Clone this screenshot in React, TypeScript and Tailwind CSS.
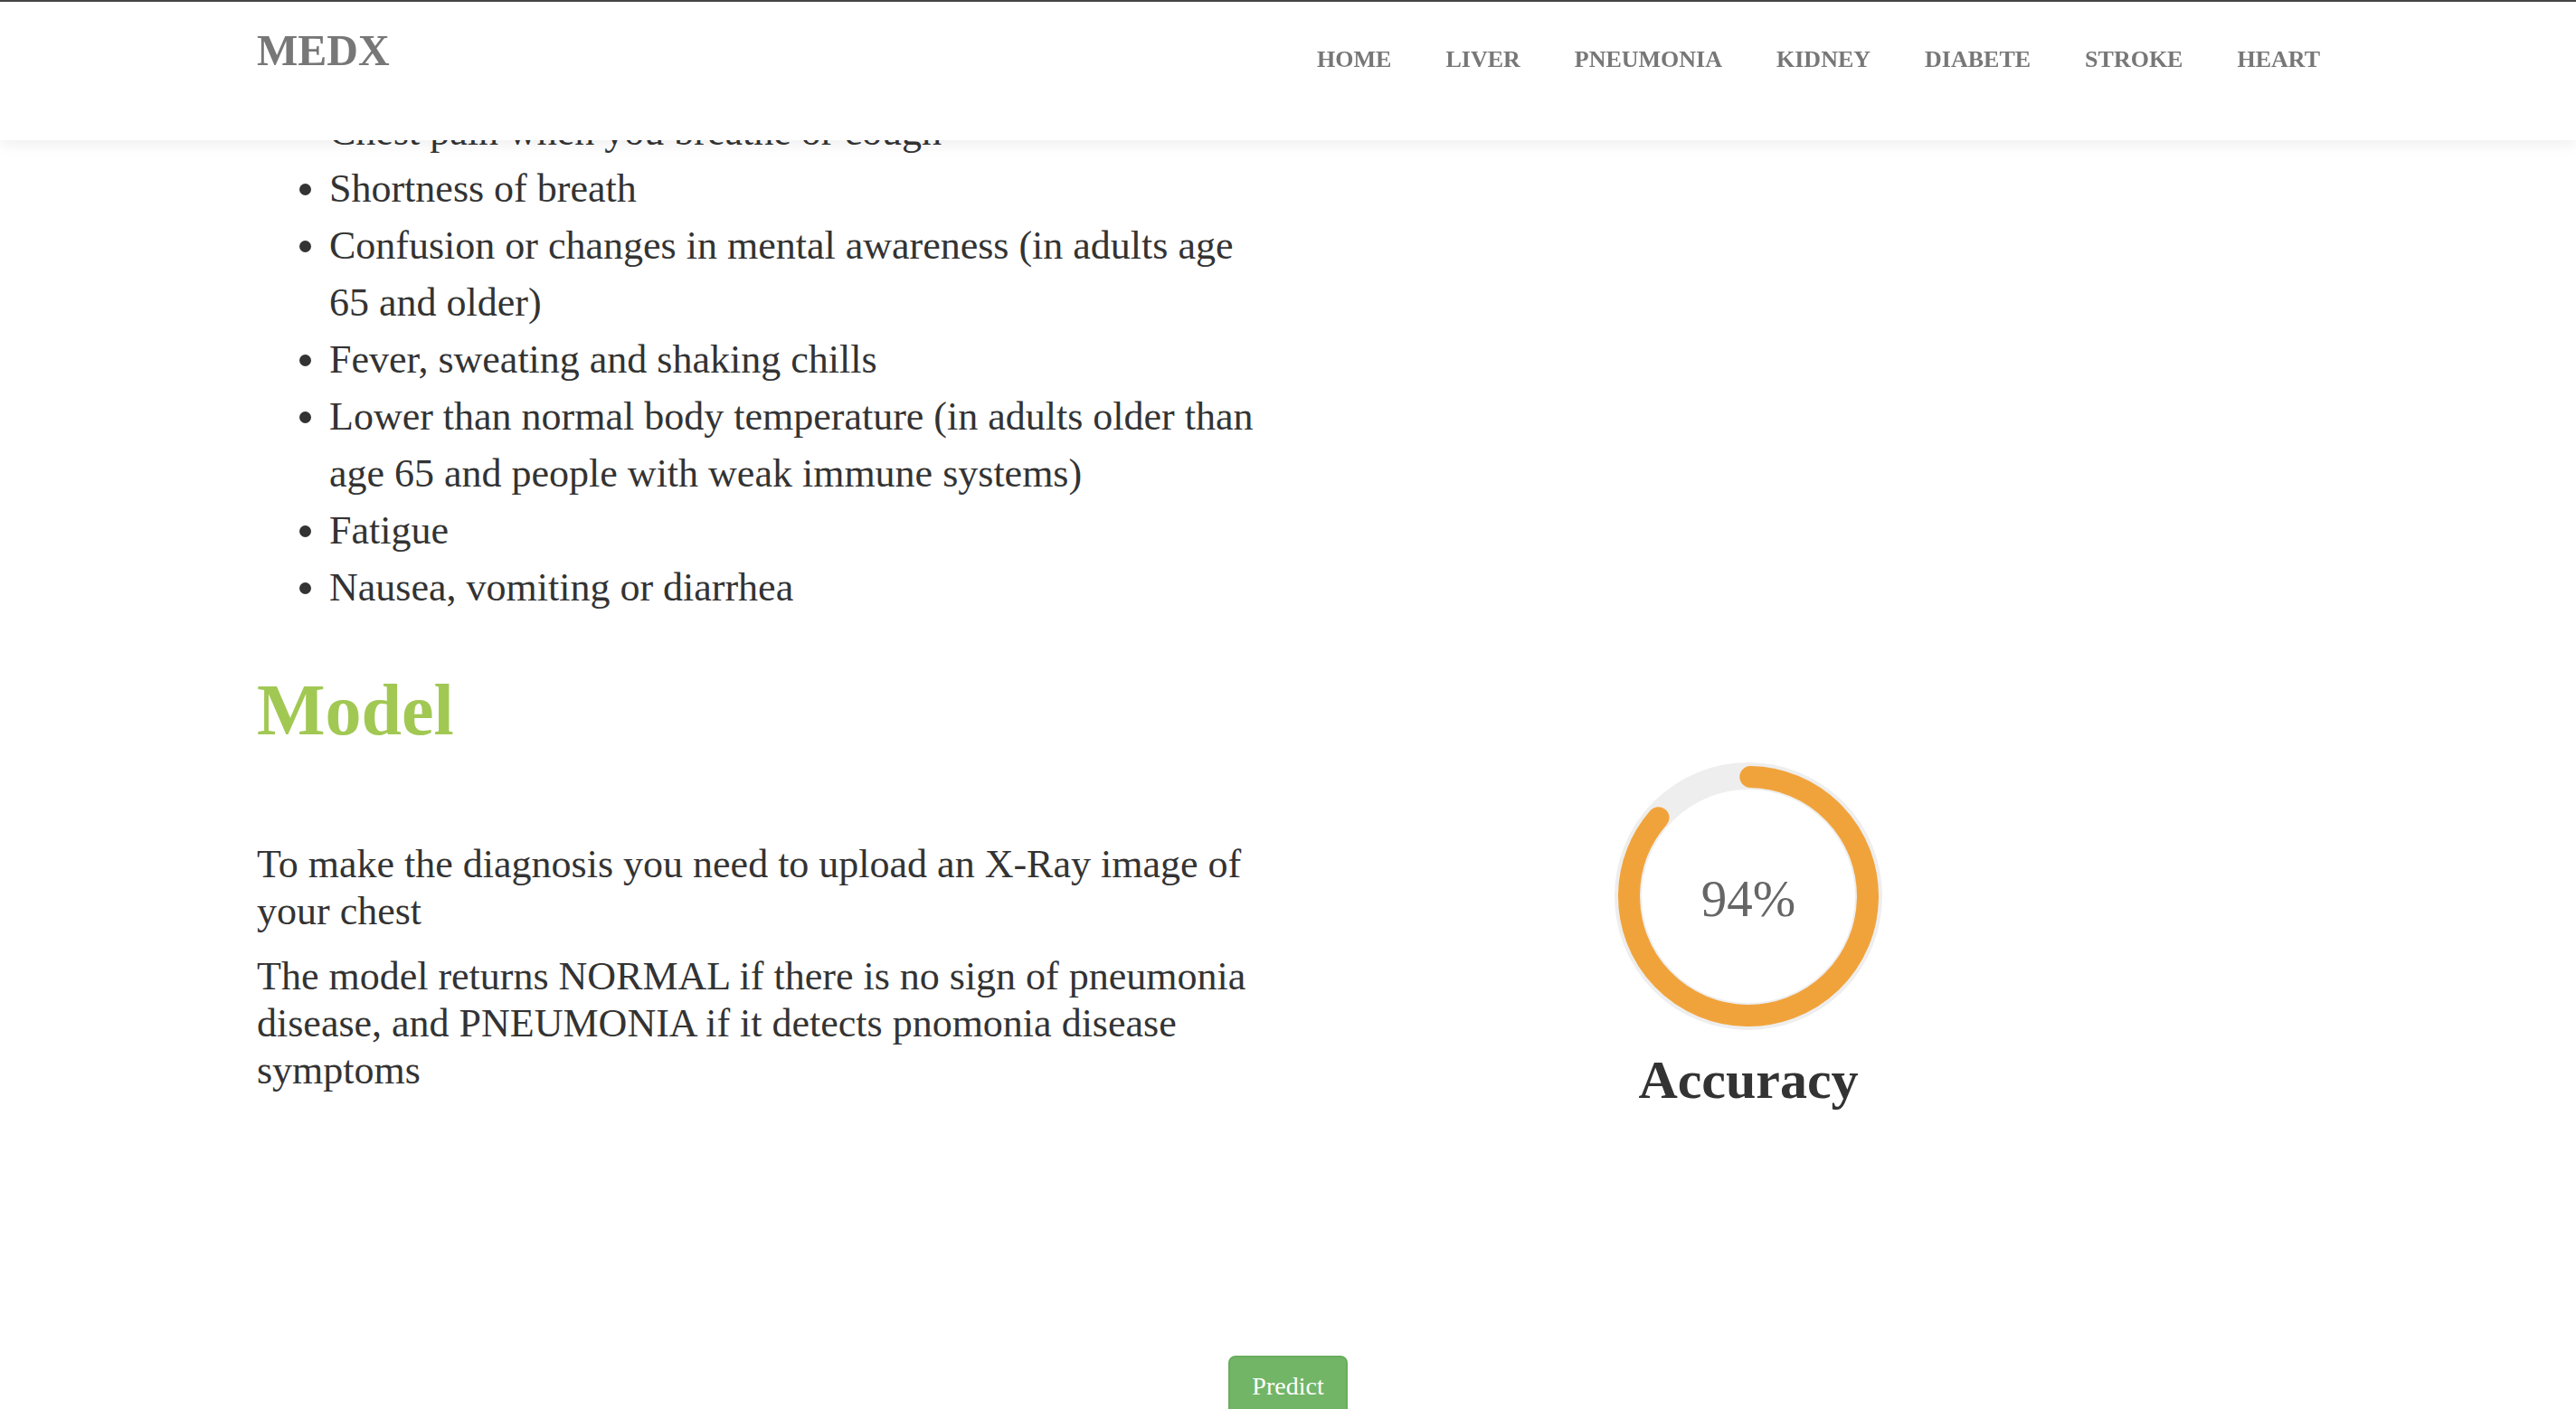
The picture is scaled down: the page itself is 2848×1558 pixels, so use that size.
import React from "react";

const NAV_LINKS = ["HOME", "LIVER", "PNEUMONIA", "KIDNEY", "DIABETE", "STROKE", "HEART"];

const SYMPTOMS = [
  "Chest pain when you breathe or cough",
  "Shortness of breath",
  "Confusion or changes in mental awareness (in adults age 65 and older)",
  "Fever, sweating and shaking chills",
  "Lower than normal body temperature (in adults older than age 65 and people with weak immune systems)",
  "Fatigue",
  "Nausea, vomiting or diarrhea",
];

const ACCURACY = 94;
const RADIUS = 132;
const CIRCUMFERENCE = 2 * Math.PI * RADIUS;
// the arc in the picture stops a bit short of the value, roughly 310deg
const ARC = (310 / 360) * CIRCUMFERENCE;

const AccuracyRing: React.FC = () => (
  <div className="flex flex-col items-center w-[300px]">
    <div className="relative w-[300px] h-[300px]">
      <svg width="300" height="300" viewBox="0 0 300 300">
        <circle cx="150" cy="150" r="133" fill="none" stroke="#eeeeee" strokeWidth="30" />
        <circle
          cx="150"
          cy="150"
          r={RADIUS}
          fill="none"
          stroke="#f1a33b"
          strokeWidth="24"
          strokeLinecap="round"
          strokeDasharray={`${ARC} ${CIRCUMFERENCE}`}
          transform="rotate(-89 150 150)"
        />
      </svg>
      <div className="absolute inset-0 flex items-center justify-center">
        <span className="text-[57px] leading-none text-[#666] pt-[4px]">{ACCURACY}%</span>
      </div>
    </div>
    <h3 className="mt-[20px] text-[60px] leading-[66px] font-bold text-[#333]">Accuracy</h3>
  </div>
);

export default function App() {
  return (
    <div className="min-h-screen bg-white text-[#333] font-['Liberation_Serif','Times_New_Roman',serif]">
      {/* Top navbar, fixed over the scrolled page */}
      <header className="fixed top-0 inset-x-0 z-10 h-[155px] bg-white border-t-2 border-[#444] shadow-[0_6px_14px_rgba(0,0,0,0.06)]">
        <div className="w-[2280px] mx-auto flex justify-between items-start">
          <a className="mt-[30px] text-[48px] leading-[48px] font-bold text-[#777]">MEDX</a>
          <nav className="mt-[51px] flex gap-[60px] mr-[-1px]">
            {NAV_LINKS.map((link) => (
              <a key={link} className="text-[26px] leading-[26px] font-bold text-[#777]">
                {link}
              </a>
            ))}
          </nav>
        </div>
      </header>

      <main className="w-[2280px] mx-auto pt-[114px]">
        <ul className="w-[1110px] list-disc pl-[80px] text-[44px] leading-[63px]">
          {SYMPTOMS.map((s) => (
            <li key={s}>{s}</li>
          ))}
        </ul>

        <section className="mt-[61px] grid grid-cols-2 gap-[60px]">
          <div>
            <h2 className="text-[80px] leading-[86px] font-bold text-[#a2c854]">Model</h2>
            <p className="mt-[102px] text-[44px] leading-[52px]">
              To make the diagnosis you need to upload an X-Ray image of your chest
            </p>
            <p className="mt-[20px] text-[44px] leading-[52px]">
              The model returns NORMAL if there is no sign of pneumonia disease, and PNEUMONIA if it
              detects pnomonia disease symptoms
            </p>
          </div>
          <div className="pt-[99px] pl-[329px]">
            <AccuracyRing />
          </div>
        </section>

        <div className="mt-[272px] flex justify-center pb-[60px]">
          <button className="px-[24px] py-[12px] rounded-[8px] border-2 border-[#69ad5d] bg-[#72b567] text-white text-[28px] leading-[40px]">
            Predict
          </button>
        </div>
      </main>
    </div>
  );
}
